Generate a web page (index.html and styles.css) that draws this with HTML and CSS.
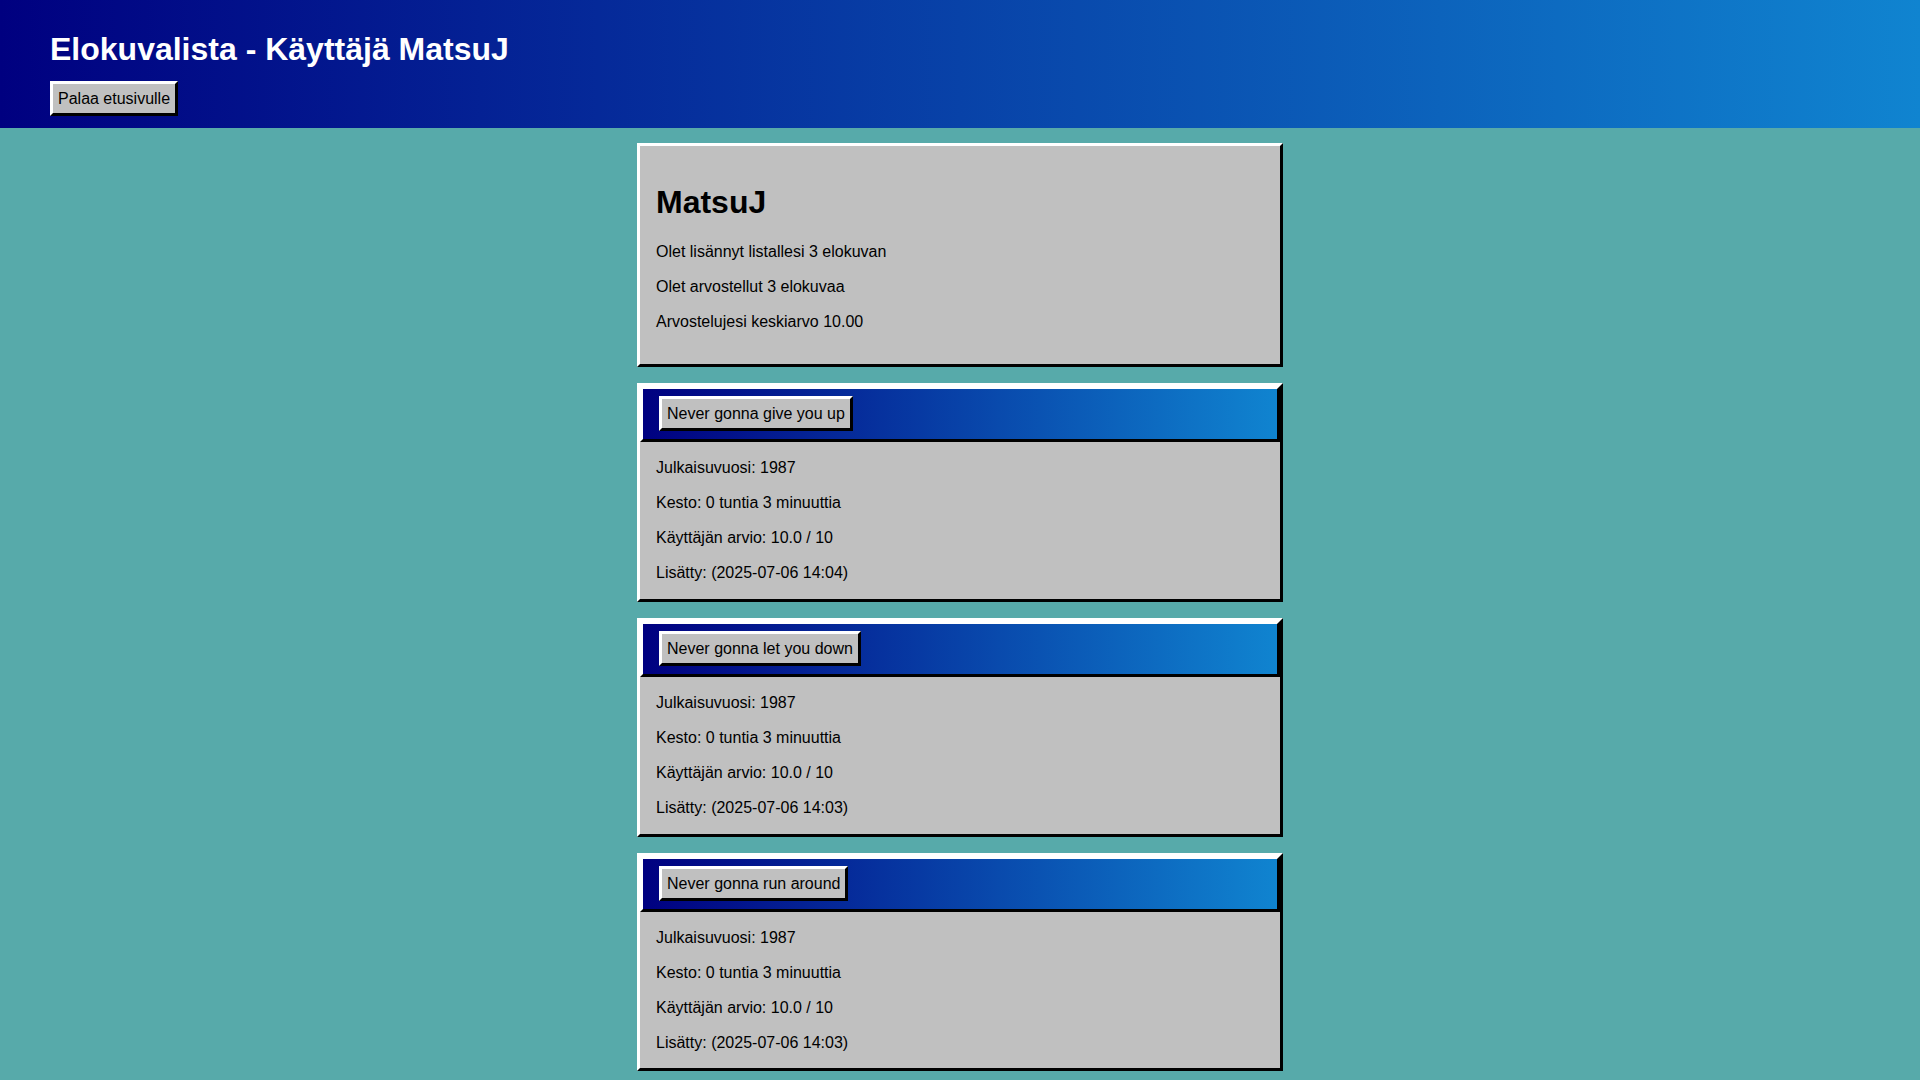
FILE: index.html
```html
<!DOCTYPE html>
<html lang="fi">
<head>
<meta charset="utf-8">
<title>Elokuvalista - Käyttäjä MatsuJ</title>
<link rel="stylesheet" href="styles.css">
</head>
<body>
<header class="topbar">
  <h1 class="title">Elokuvalista - Käyttäjä MatsuJ</h1>
  <button class="btn">Palaa etusivulle</button>
</header>
<main class="content">
  <section class="card profile">
    <h1 class="name">MatsuJ</h1>
    <p>Olet lisännyt listallesi 3 elokuvan</p>
    <p>Olet arvostellut 3 elokuvaa</p>
    <p>Arvostelujesi keskiarvo 10.00</p>
  </section>
  <section class="card movie">
    <div class="movie-head"><button class="btn">Never gonna give you up</button></div>
    <div class="movie-body">
      <p>Julkaisuvuosi: 1987</p>
      <p>Kesto: 0 tuntia 3 minuuttia</p>
      <p>Käyttäjän arvio: 10.0 / 10</p>
      <p>Lisätty: (2025-07-06 14:04)</p>
    </div>
  </section>
  <section class="card movie">
    <div class="movie-head"><button class="btn">Never gonna let you down</button></div>
    <div class="movie-body">
      <p>Julkaisuvuosi: 1987</p>
      <p>Kesto: 0 tuntia 3 minuuttia</p>
      <p>Käyttäjän arvio: 10.0 / 10</p>
      <p>Lisätty: (2025-07-06 14:03)</p>
    </div>
  </section>
  <section class="card movie">
    <div class="movie-head"><button class="btn">Never gonna run around</button></div>
    <div class="movie-body">
      <p>Julkaisuvuosi: 1987</p>
      <p>Kesto: 0 tuntia 3 minuuttia</p>
      <p>Käyttäjän arvio: 10.0 / 10</p>
      <p>Lisätty: (2025-07-06 14:03)</p>
    </div>
  </section>
</main>
</body>
</html>
```
FILE: styles.css
```css
html, body {
  margin: 0;
  padding: 0;
}
body {
  background: #57aaaa;
  font-family: "Liberation Sans", Arial, sans-serif;
  font-size: 16px;
  color: #000;
}
.topbar {
  background: linear-gradient(to right, #000080, #1084d0);
  padding: 31px 50px 12px;
  color: #fff;
}
.title {
  margin: 0 0 13px;
  font-size: 32px;
  font-weight: bold;
  line-height: normal;
}
.btn {
  font-family: "Liberation Sans", Arial, sans-serif;
  font-size: 16px;
  line-height: 1.2;
  color: #000;
  background: #c0c0c0;
  border: 3px solid;
  border-color: #fff #000 #000 #fff;
  padding: 5px;
  margin: 0;
  display: inline-block;
}
.content {
  display: flex;
  flex-direction: column;
  align-items: center;
  gap: 16px;
  padding: 15px 0 16px;
}
.card {
  box-sizing: border-box;
  width: 646px;
  background: #c0c0c0;
  border: 3px solid;
  border-color: #fff #000 #000 #fff;
}
.profile {
  padding: 16px;
}
.name {
  font-size: 32px;
  margin: 21.44px 0;
  line-height: normal;
}
.card p {
  margin: 16px 0;
  line-height: 1.2;
}
.movie-head {
  display: flex;
  align-items: flex-start;
  background: linear-gradient(to right, #000080, #1084d0);
  border: 3px solid;
  border-color: #fff #000 #000 #fff;
  padding: 7px 16px 8px;
}
.movie-body {
  padding: 0 16px;
  overflow: hidden;
}
```
